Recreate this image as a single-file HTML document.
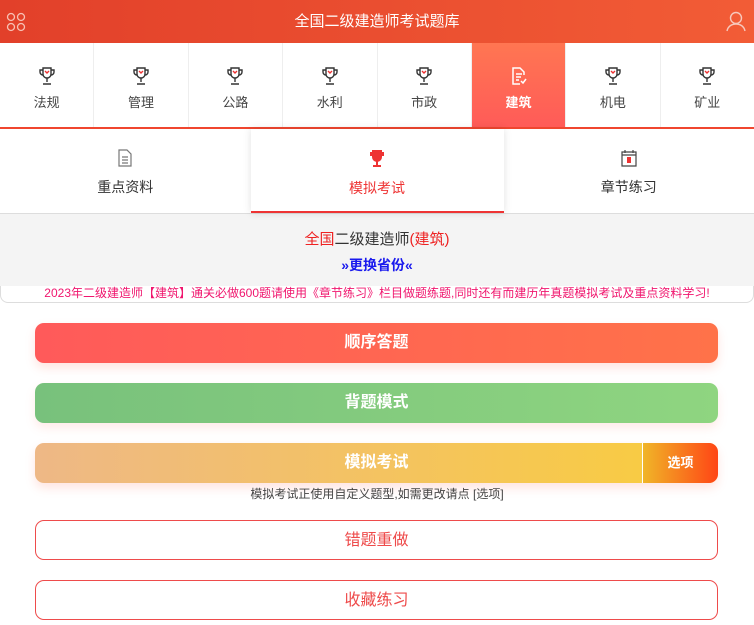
<!DOCTYPE html>
<html><head><meta charset="utf-8"><style>
*{margin:0;padding:0;box-sizing:border-box}
body{width:754px;height:625px;overflow:hidden;background:#fff;font-family:"Liberation Sans","Noto Sans CJK SC",sans-serif;position:relative}
.hd{height:43px;background:linear-gradient(90deg,#e2402a,#f25c36);color:#fff;text-align:center;line-height:43px;font-size:15px;position:relative}
.nav{display:flex;height:86px;border-bottom:2px solid #f0462f}
.nav div{flex:1;border-right:1px solid #eee;text-align:center;font-size:13px;color:#444;padding-top:24px}
.nav div:last-child{border-right:none}
.nav div.on{background:linear-gradient(180deg,#ff7652,#ff5b58);color:#fff;font-weight:bold}
.nav svg{display:block;margin:0 auto 7px}
.tabs{display:flex;height:85px;border-bottom:1px solid #ddd}
.tabs div{flex:1;text-align:center;font-size:14px;color:#333;padding-top:20px}
.tabs div.on{flex:0 0 253px;color:#e33;box-shadow:0 0 8px rgba(0,0,0,.12);border-bottom:2px solid #e33;position:relative;z-index:1}
.tabs svg{display:block;margin:0 auto 10px}
.gray{background:#f4f4f4;height:72px;text-align:center;padding-top:14px;font-size:15px;color:#333}
.gray b{display:block;color:#1a1aee;font-size:14px;margin-top:6px}
.note{height:17px;border:1px solid #ddd;border-top:none;border-radius:0 0 8px 8px;font-size:12px;color:#f0166e;text-align:center;line-height:15px;white-space:nowrap;overflow:hidden}
.btn{position:absolute;left:35px;width:683px;height:40px;border-radius:9px;color:#fff;font-weight:bold;font-size:16px;text-align:center;line-height:40px;box-shadow:0 5px 10px rgba(255,120,100,.2)}
.ol{background:#fff;border:1px solid #ee4b4b;color:#ee4b4b;font-weight:normal;box-shadow:none}
</style></head><body>
<div class="hd">全国二级建造师考试题库
<svg style="position:absolute;left:6px;top:12px" width="20" height="20" viewBox="0 0 20 20" fill="none" stroke="#f7c0b4" stroke-width="1.3"><circle cx="5" cy="5" r="3.5"/><circle cx="15" cy="5" r="3.5"/><circle cx="5" cy="15" r="3.5"/><circle cx="15" cy="15" r="3.5"/></svg>
<svg style="position:absolute;right:8px;top:11px" width="20" height="21" viewBox="0 0 20 21" fill="none" stroke="#f7c8bc" stroke-width="1.4"><circle cx="10" cy="7" r="5.5"/><path d="M1 20c1-5 5-7 9-7s8 2 9 7"/></svg>
</div>
<div class="nav">
<div><svg width="16" height="18" viewBox="0 0 16 18" fill="none" stroke="#333" stroke-width="1.4"><path d="M4 1h8v6a4 4 0 0 1-8 0z"/><path d="M4 3H1v2a3 3 0 0 0 3 3M12 3h3v2a3 3 0 0 1-3 3M8 11v4M4 17h8"/><path d="M6 4l2 2 2-2" stroke="#e33"/></svg>法规</div>
<div><svg width="16" height="18" viewBox="0 0 16 18" fill="none" stroke="#333" stroke-width="1.4"><path d="M4 1h8v6a4 4 0 0 1-8 0z"/><path d="M4 3H1v2a3 3 0 0 0 3 3M12 3h3v2a3 3 0 0 1-3 3M8 11v4M4 17h8"/><path d="M6 4l2 2 2-2" stroke="#e33"/></svg>管理</div>
<div><svg width="16" height="18" viewBox="0 0 16 18" fill="none" stroke="#333" stroke-width="1.4"><path d="M4 1h8v6a4 4 0 0 1-8 0z"/><path d="M4 3H1v2a3 3 0 0 0 3 3M12 3h3v2a3 3 0 0 1-3 3M8 11v4M4 17h8"/><path d="M6 4l2 2 2-2" stroke="#e33"/></svg>公路</div>
<div><svg width="16" height="18" viewBox="0 0 16 18" fill="none" stroke="#333" stroke-width="1.4"><path d="M4 1h8v6a4 4 0 0 1-8 0z"/><path d="M4 3H1v2a3 3 0 0 0 3 3M12 3h3v2a3 3 0 0 1-3 3M8 11v4M4 17h8"/><path d="M6 4l2 2 2-2" stroke="#e33"/></svg>水利</div>
<div><svg width="16" height="18" viewBox="0 0 16 18" fill="none" stroke="#333" stroke-width="1.4"><path d="M4 1h8v6a4 4 0 0 1-8 0z"/><path d="M4 3H1v2a3 3 0 0 0 3 3M12 3h3v2a3 3 0 0 1-3 3M8 11v4M4 17h8"/><path d="M6 4l2 2 2-2" stroke="#e33"/></svg>市政</div>
<div class="on"><svg width="16" height="18" viewBox="0 0 16 18" fill="none" stroke="#fff" stroke-width="1.5"><path d="M13 8V5l-4-4H2v16h7"/><path d="M5 7h6M5 10h5M5 13h3M10 14l2 2 3-4"/></svg>建筑</div>
<div><svg width="16" height="18" viewBox="0 0 16 18" fill="none" stroke="#333" stroke-width="1.4"><path d="M4 1h8v6a4 4 0 0 1-8 0z"/><path d="M4 3H1v2a3 3 0 0 0 3 3M12 3h3v2a3 3 0 0 1-3 3M8 11v4M4 17h8"/><path d="M6 4l2 2 2-2" stroke="#e33"/></svg>机电</div>
<div><svg width="16" height="18" viewBox="0 0 16 18" fill="none" stroke="#333" stroke-width="1.4"><path d="M4 1h8v6a4 4 0 0 1-8 0z"/><path d="M4 3H1v2a3 3 0 0 0 3 3M12 3h3v2a3 3 0 0 1-3 3M8 11v4M4 17h8"/><path d="M6 4l2 2 2-2" stroke="#e33"/></svg>矿业</div>
</div>
<div class="tabs">
<div><svg width="14" height="18" viewBox="0 0 14 18" fill="none" stroke="#777" stroke-width="1.2"><path d="M1 1h8l4 4v12H1z"/><path d="M4 8h6M4 11h6M4 14h6"/></svg>重点资料</div>
<div class="on"><svg width="16" height="19" viewBox="0 0 16 19" fill="#e33"><path d="M3 1h10v7a5 5 0 0 1-10 0z"/><path d="M7 12h2v4H7zM4 16h8v2H4zM1 3h2v4H1zM13 3h2v4h-2z"/></svg>模拟考试</div>
<div><svg width="16" height="18" viewBox="0 0 16 18" fill="none" stroke="#444" stroke-width="1.2"><path d="M1 3h14v14H1zM1 6h14M4 1v3M12 1v3"/><rect x="6" y="8" width="4" height="6" fill="#e33" stroke="none"/></svg>章节练习</div>
</div>
<div class="gray"><span style="color:#e22">全国</span>二级建造师<span style="color:#e22">(建筑)</span><b>»更换省份«</b></div>
<div class="note">2023年二级建造师【建筑】通关必做600题请使用《章节练习》栏目做题练题,同时还有而建历年真题模拟考试及重点资料学习!</div>
<div class="btn" style="top:323px;background:linear-gradient(90deg,#ff5a5a,#ff7249)">顺序答题</div>
<div class="btn" style="top:383px;background:linear-gradient(90deg,#78c17c,#8fd580);box-shadow:0 5px 10px rgba(255,120,100,.15)">背题模式</div>
<div class="btn" style="top:443px;background:linear-gradient(90deg,#eeb886,#f8cb45 88%);overflow:hidden"><span style="position:absolute;left:0;width:683px;text-align:center">模拟考试</span><span style="position:absolute;right:0;width:76px;height:40px;border-left:1px solid #fff;background:linear-gradient(90deg,#f0b528,#ff4515);font-size:13px">选项</span></div>
<div style="position:absolute;top:485px;width:754px;text-align:center;font-size:12px;color:#444">模拟考试正使用自定义题型,如需更改请点 [选项]</div>
<div class="btn ol" style="top:520px">错题重做</div>
<div class="btn ol" style="top:580px">收藏练习</div>
</body></html>
